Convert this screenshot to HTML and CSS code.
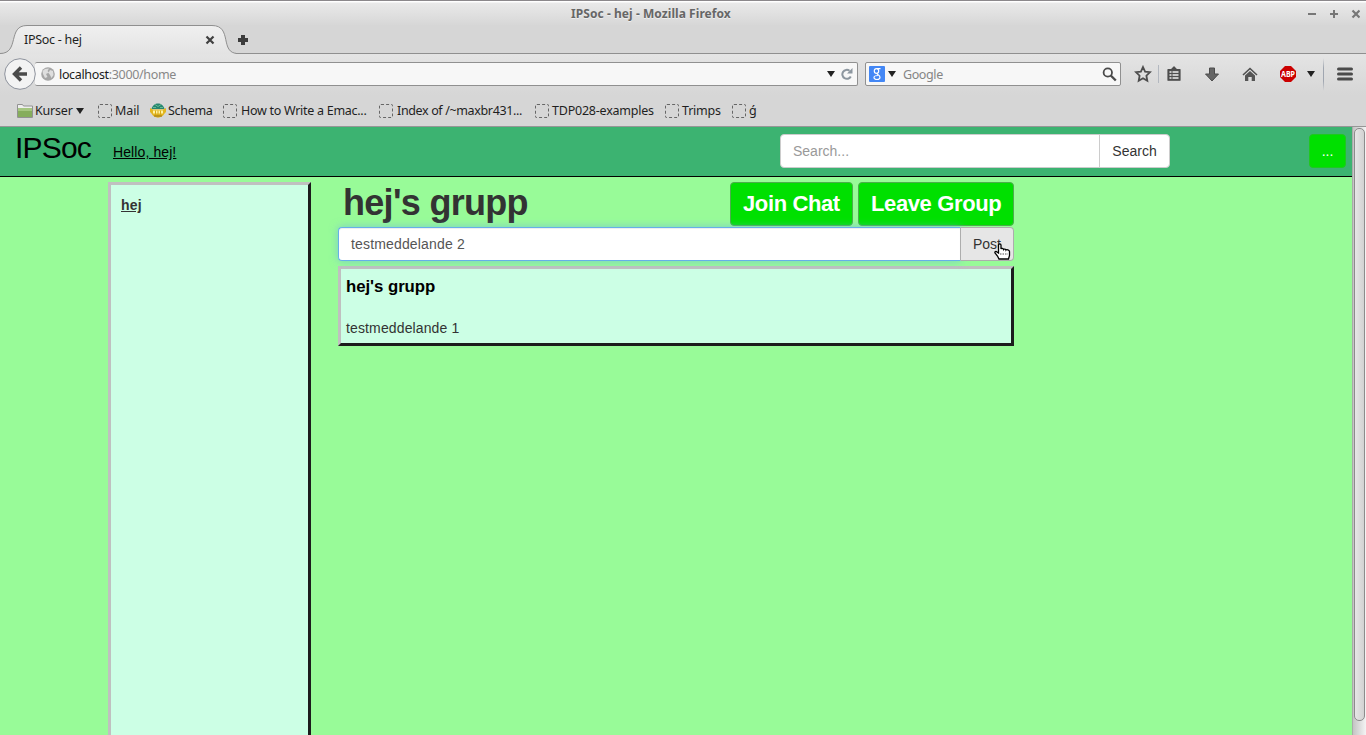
FILE: index.html
```
<!DOCTYPE html>
<html lang="sv">
<head>
<meta charset="utf-8">
<title>IPSoc - hej</title>
<link rel="stylesheet" href="styles.css">
</head>
<body>
<div class="window">
  <div class="chrome">
    <div class="titlebar">
      <span class="title">IPSoc - hej - Mozilla Firefox</span>
      <svg class="win-controls" width="56" height="12" viewBox="0 0 56 12"><g fill="none" stroke="#777" stroke-width="2"><path d="M4 6h8M26 6h8M30 2v8"/><path d="M48.500 2.500l7 7M55.500 2.500l-7 7" stroke-width="2.200"/></g></svg>
    </div>
    <div class="tabstrip">
      <svg class="tab-shape" width="236" height="29" viewBox="0 0 236 29"><defs><linearGradient id="tab" x1="0" y1="0" x2="0" y2="1"><stop offset="0" stop-color="#f0f0f0"/><stop offset="1" stop-color="#e3e3e3"/></linearGradient></defs><path d="M0 28.500C20 28.500 7 .5 27 .5H212C233 .5 219 28.500 238 28.500V29H0Z" fill="url(#tab)"/><path d="M0 28.500C20 28.500 7 .5 27 .5H212C233 .5 219 28.500 238 28.500" fill="none" stroke="#8f8f8f"/></svg>
      <div class="tab"><span class="tab-name">IPSoc - hej</span>
        <svg width="10" height="10" viewBox="0 0 10 10"><path d="M1.500 1.500l7 7M8.500 1.500l-7 7" stroke="#404040" stroke-width="2.200"/></svg>
      </div>
      <svg class="new-tab" width="12" height="12" viewBox="0 0 12 12"><path d="M4 1h4v3h3v4H8v3H4V8H1V4h3z" fill="#3c3c3c"/></svg>
    </div>
    <div class="toolbar">
      <svg class="back" width="32" height="32" viewBox="0 0 32 32"><circle cx="16" cy="16" r="15.300" fill="#f3f3f3" stroke="#8d929c"/><path d="M17 9.500L10.500 16l6.500 6.500M11 16h12" fill="none" stroke="#4b4b4b" stroke-width="3.400"/></svg>
      <div class="urlbar">
        <svg width="14" height="14" viewBox="0 0 14 14"><circle cx="7" cy="7" r="6.800" fill="#a6a6a6"/><path d="M1.500 4L4 2l4-.500L6.500 4 8 5.500 5 7l1.500 3L4 11 2 7zM9 3l3 1 .500 4-2 3-1.500-3L7.500 6z" fill="#dedede"/></svg>
        <span class="url"><span class="host">localhost</span>:3000/home</span>
        <i class="caret"></i>
        <svg class="reload" width="12" height="12" viewBox="0 0 12 12"><path d="M9.800 8.500A4.500 4.500 0 1 1 8.500 2.700" fill="none" stroke="#8c969f" stroke-width="2"/><path d="M11.500 0v5.500H6z" fill="#8c969f"/></svg>
      </div>
      <div class="searchbar">
        <svg width="16" height="16" viewBox="0 0 16 16"><rect width="16" height="16" rx="1" fill="#4387f5"/><g fill="none" stroke="#fff" stroke-width="1.200"><ellipse cx="7.500" cy="5" rx="2.200" ry="2.400"/><path d="M8 2.600h3.500M8.500 7.300c-1.500 1 2.500 1.700 2.500 3.900 0 3-6 3-6 .300 0-1.500 1.500-2 4-2"/></g></svg>
        <i class="caret"></i>
        <span class="engine">Google</span>
        <svg width="15" height="15" viewBox="0 0 15 15"><circle cx="5.800" cy="5.500" r="4.200" fill="none" stroke="#4a4a4a" stroke-width="1.800"/><path d="M8.800 8.500l5 5" stroke="#4a4a4a" stroke-width="2.400"/></svg>
      </div>
      <div class="tools">
        <svg width="18" height="18" viewBox="0 0 18 18"><path d="M9 2l2.100 4.600 4.900.600-3.600 3.500.900 5.100L9 13.300l-4.300 2.500.900-5.100L2 7.200l4.900-.600z" fill="none" stroke="#4d4d4d" stroke-width="1.800"/></svg>
        <i class="sep short"></i>
        <svg class="list" width="14" height="16" viewBox="0 0 14 16"><path d="M1 3.500h3.500L7 .8l2.500 2.700H13V14.200H1z" fill="#4f4f4f" stroke="#4d4d4d" stroke-linejoin="round" stroke-width="1.200"/><path d="M2.500 6h2M5.500 6h6M2.500 9h2M5.500 9h6M2.500 12h2M5.500 12h6" stroke="#eee" stroke-width="1.600"/></svg>
        <svg class="download" width="14" height="15" viewBox="0 0 14 15"><path d="M4.500 1h5v6h4L7 14 .5 7h4z" fill="#666" stroke="#4c4c4c"/></svg>
        <svg class="home" width="16" height="15" viewBox="0 0 16 15"><path d="M1 8l7-6.500L15 8" fill="none" stroke="#505050" stroke-width="1.600"/><path d="M3 8.500L8 4l5 4.500V14H9.700v-4H6.300v4H3z" fill="#555"/></svg>
        <svg class="abp" width="16" height="16" viewBox="0 0 16 16"><path d="M5 0h6l5 5v6l-5 5H5l-5-5V5z" fill="#cb0000"/><text x="8" y="11.300" text-anchor="middle" textLength="14" lengthAdjust="spacingAndGlyphs" class="abp-text">ABP</text></svg>
        <i class="caret"></i>
        <i class="sep"></i>
        <svg class="menu" width="16" height="14" viewBox="0 0 16 14"><path d="M1.500 2h13M1.500 7h13M1.500 12h13" stroke="#4b4b4b" stroke-width="3" stroke-linecap="round"/></svg>
      </div>
    </div>
    <div class="bookmarks">
      <div class="bm w-kurser"><svg width="16" height="15" viewBox="0 0 16 15"><path d="M.5 14.500V1.500h5l1 1.500h9v11.500z" fill="#eee" stroke="#929292"/><path d="M1 5h14v9H1z" fill="#86ad5c"/><path d="M1 5h14v3H1z" fill="#a5c680"/></svg><span class="t-kurser">Kurser</span><i class="caret"></i></div>
      <div class="bm w-mail"><i class="blank"></i><span>Mail</span></div>
      <div class="bm w-schema"><svg width="16" height="15" viewBox="0 0 16 15"><path d="M1.500 6C3-1.500 13-1.500 14.500 6z" fill="#278570"/><path d="M5 1.500l3 2 3-2M3 4.500h3M10 4.500h3" stroke="#65bb91" fill="none"/><path d="M0 5l3 1.500h10L16 5v4l-1.500 1.500C12 16 4 16 1.500 10.500L0 9z" fill="#e2b51e"/><path d="M3 7.500h10v3H3z" fill="#fff3a2"/><path d="M5.500 7.500v5M8 7.500v5M10.500 7.500v5" stroke="#d9a913"/><path d="M4 13h8" stroke="#9a7414"/></svg><span>Schema</span></div>
      <div class="bm w-emacs"><i class="blank"></i><span>How to Write a Emac...</span></div>
      <div class="bm w-index"><i class="blank"></i><span>Index of /~maxbr431...</span></div>
      <div class="bm w-tdp"><i class="blank"></i><span>TDP028-examples</span></div>
      <div class="bm w-trimps"><i class="blank"></i><span>Trimps</span></div>
      <div class="bm w-last"><i class="blank"></i><span>ǵ</span></div>
    </div>
  </div>
  <div class="viewport">
    <div class="page">
      <header class="navbar">
        <span class="brand">IPSoc</span>
        <a class="hello">Hello, hej!</a>
        <div class="search"><div class="search-field">Search...</div><div class="search-btn">Search</div></div>
        <div class="more">...</div>
      </header>
      <main class="content">
        <aside class="sidebar"><a>hej</a></aside>
        <section class="group">
          <div class="group-head"><h1>hej's grupp</h1><div class="btn join">Join Chat</div><div class="btn leave">Leave Group</div></div>
          <div class="post-form"><div class="post-field">testmeddelande 2</div><div class="post-btn">Post
            <svg class="cursor" width="17" height="17" viewBox="0 0 17 17"><path d="M4.500 10V2c0-1.500 2.500-1.500 2.500 0v4c.500-1 2.300-.700 2.500.500.500-.800 2.300-.500 2.500.500.500-.800 3.500-.300 3.500 1.500v4l-1 3.500H5L3.500 13 1 10c-.500-1.500 1-2 2-1z" fill="#fff" stroke="#000" stroke-width="1.300"/><path d="M6 11h8" stroke="#555" stroke-dasharray="1.500 1"/></svg>
          </div></div>
          <article class="post"><h2>hej's grupp</h2><p>testmeddelande 1</p></article>
        </section>
      </main>
    </div>
    <div class="scrollbar"><div class="thumb"></div></div>
  </div>
</div>
</body>
</html>
```
FILE: styles.css
```
* { box-sizing: border-box; }
body { margin: 0; overflow: hidden; font: 14px/20px "Liberation Sans", Arial, sans-serif; color: #333; }
svg { display: block; flex: none; }
.window { width: 1366px; height: 735px; display: flex; flex-direction: column; }

/* browser frame */
.chrome { height: 127px; flex: none; background: #d6d6d6; border-top: 1px solid #8b888b; border-bottom: 1px solid #969696; font: 12.5px/18px "Noto Sans", sans-serif; letter-spacing: -.28px; color: #1f1f1f; white-space: nowrap; }
.titlebar { height: 24px; display: flex; align-items: center; background: linear-gradient(#fff 0, #fff 1px, #e9e9e9 2px, #d7d7d7); padding: 1px 6px 0 571px; }
.title { font-weight: bold; font-size: 12px; letter-spacing: .06px; color: #666; flex: 1; text-shadow: 0 1px #eee; }
.tabstrip { height: 29px; position: relative; display: flex; align-items: center; border-bottom: 1px solid #8f8f8f; padding-top: 1px; }
.tab-shape { position: absolute; left: 0; top: 0; }
.tab { position: relative; width: 215px; padding-left: 24px; display: flex; align-items: center; justify-content: space-between; }
.new-tab { margin-left: 22px; }
.toolbar { height: 41px; display: flex; align-items: center; padding: 0 0 1px 4px; background: linear-gradient(#e4e4e4, #d6d6d6); }
.back { position: relative; z-index: 1; }
.urlbar, .searchbar { height: 24px; display: flex; align-items: center; background: #f7f7f7; border: 1px solid #909090; border-radius: 2px; }
.urlbar { width: 823px; margin-left: -1px; padding-left: 6px; border-left: 0; }
.url { margin-left: 4px; padding-top: 2px; flex: 1; color: #888; letter-spacing: -.34px; }
.host { color: #1b1b1b; }
.caret { flex: none; width: 0; height: 0; border: 4.5px solid transparent; border-top: 6px solid #222; border-bottom: 0; }
.reload { margin: 0 4px 0 6px; }
.searchbar { width: 256px; margin-left: 7px; padding-left: 3px; }
.searchbar .caret { margin-left: 3px; }
.engine { margin-left: 7px; padding-top: 2px; flex: 1; color: #858585; letter-spacing: -.4px; }
.searchbar > svg:last-child { margin-right: 3px; }
.tools { display: flex; align-items: center; margin-left: 13px; }
.sep { width: 1px; height: 33px; background: linear-gradient(rgba(160,166,176,0), #a0a6b0 30%, #a0a6b0 70%, rgba(160,166,176,0)); margin-left: 8px; }
.sep.short { height: 18px; background: #b3b8c0; margin-left: 6px; }
.list { margin-left: 8px; }
.download { margin-left: 24px; }
.home { margin-left: 23px; }
.abp { margin-left: 22px; }
.abp-text { font: bold 8px "Noto Sans", sans-serif; letter-spacing: 0; fill: #fff; }
.tools .caret { margin-left: 11px; }
.menu { margin-left: 13px; }
.bookmarks { display: flex; align-items: center; height: 31px; padding-left: 17px; }
.bm { display: flex; align-items: center; flex: none; gap: 2px; }
.blank { width: 14px; height: 14px; border: 1px dashed #666; border-radius: 2px; }
.w-kurser { width: 81px; }
.w-kurser .caret { margin-left: 1px; }
.t-kurser { letter-spacing: -.2px; }
.w-mail { width: 52px; gap: 3px; letter-spacing: -.1px; }
.w-schema { width: 73px; letter-spacing: -.3px; }
.w-emacs { width: 156px; }
.w-emacs, .w-index { gap: 4px; }
.w-index { width: 156px; letter-spacing: -.36px; }
.w-tdp { width: 130px; gap: 3px; letter-spacing: -.22px; }
.w-trimps { width: 67px; gap: 3px; letter-spacing: -.2px; }
.w-last { gap: 3px; }

/* page */
.viewport { flex: 1; min-height: 0; display: flex; }
.page { width: 1352px; background: #98fb98; display: flex; flex-direction: column; }
.navbar { height: 50px; flex: none; background: #3cb371; border-bottom: 1px solid #000; display: flex; align-items: flex-start; padding: 7px 6px 0 15px; color: #000; }
.brand { width: 98px; font-size: 30px; line-height: 28px; letter-spacing: -.8px; }
.hello { width: 667px; padding-top: 8px; text-decoration: underline; letter-spacing: .1px; }
.search { display: flex; height: 34px; width: 390px; background: #fff; border: 1px solid #ccc; border-radius: 4px; line-height: 32px; color: #333; }
.search-field { width: 319px; padding-left: 12px; border-right: 1px solid #ccc; color: #999; }
.search-btn { flex: 1; text-align: center; }
.more { width: 37px; height: 34px; margin-left: 139px; border: 1px solid #1fc81f; border-radius: 4px; background: #00e000; color: #fff; text-align: center; line-height: 32px; }
.content { flex: 1; min-height: 0; display: flex; padding: 5px 0 0 108px; }
.sidebar, .post { background: #ccffe5; border: 3px solid; border-color: #c0c0c0 #1c1c1c #1c1c1c #c0c0c0; }
.sidebar { width: 203px; padding: 10px; border-bottom: 0; font-weight: bold; text-decoration: underline; letter-spacing: .2px; }
.group { width: 676px; margin-left: 27px; }
.group-head { display: flex; gap: 5px; height: 45px; }
h1 { flex: 1; margin: 0; padding-left: 5px; font-size: 36px; line-height: 41px; letter-spacing: -.7px; white-space: nowrap; }
.btn { height: 44px; border: 1px solid #4cae4c; border-radius: 4px; background: #00e000; color: #fff; padding-left: 12px; font-weight: bold; font-size: 22px; line-height: 42px; letter-spacing: -.38px; white-space: nowrap; }
.join { width: 123px; }
.leave { width: 156px; }
.post-form { display: flex; height: 34px; line-height: 32px; }
.post-field { width: 623px; border: 1px solid #66afe9; border-right-color: #adadad; border-radius: 4px 0 0 4px; background: #fff; color: #555; padding-left: 12px; letter-spacing: .16px; box-shadow: inset 0 1px 1px rgba(0,0,0,.075), 0 0 8px rgba(102,175,233,.6); }
.post-btn { position: relative; flex: 1; border: 1px solid #adadad; border-left: 0; border-radius: 0 4px 4px 0; background: #e6e6e6; padding-left: 12px; }
.cursor { position: absolute; left: 33px; top: 15px; }
.post { margin-top: 5px; height: 80px; padding: 8px 5px; }
.post h2 { margin: 0 0 21px; font-size: 16.8px; line-height: 20px; letter-spacing: -.05px; color: #000; }
.post p { margin: 0; letter-spacing: .13px; }
.scrollbar { width: 14px; background: linear-gradient(90deg, #c4c4c4, #f4f4f4); border-left: 1px solid #aaa; padding: 1px 1px 0; }
.thumb { width: 11px; height: 593px; border: 1px solid #8c8c8c; border-radius: 5px; background: linear-gradient(90deg, #e6e6e6, #d2d2d2); }
```
